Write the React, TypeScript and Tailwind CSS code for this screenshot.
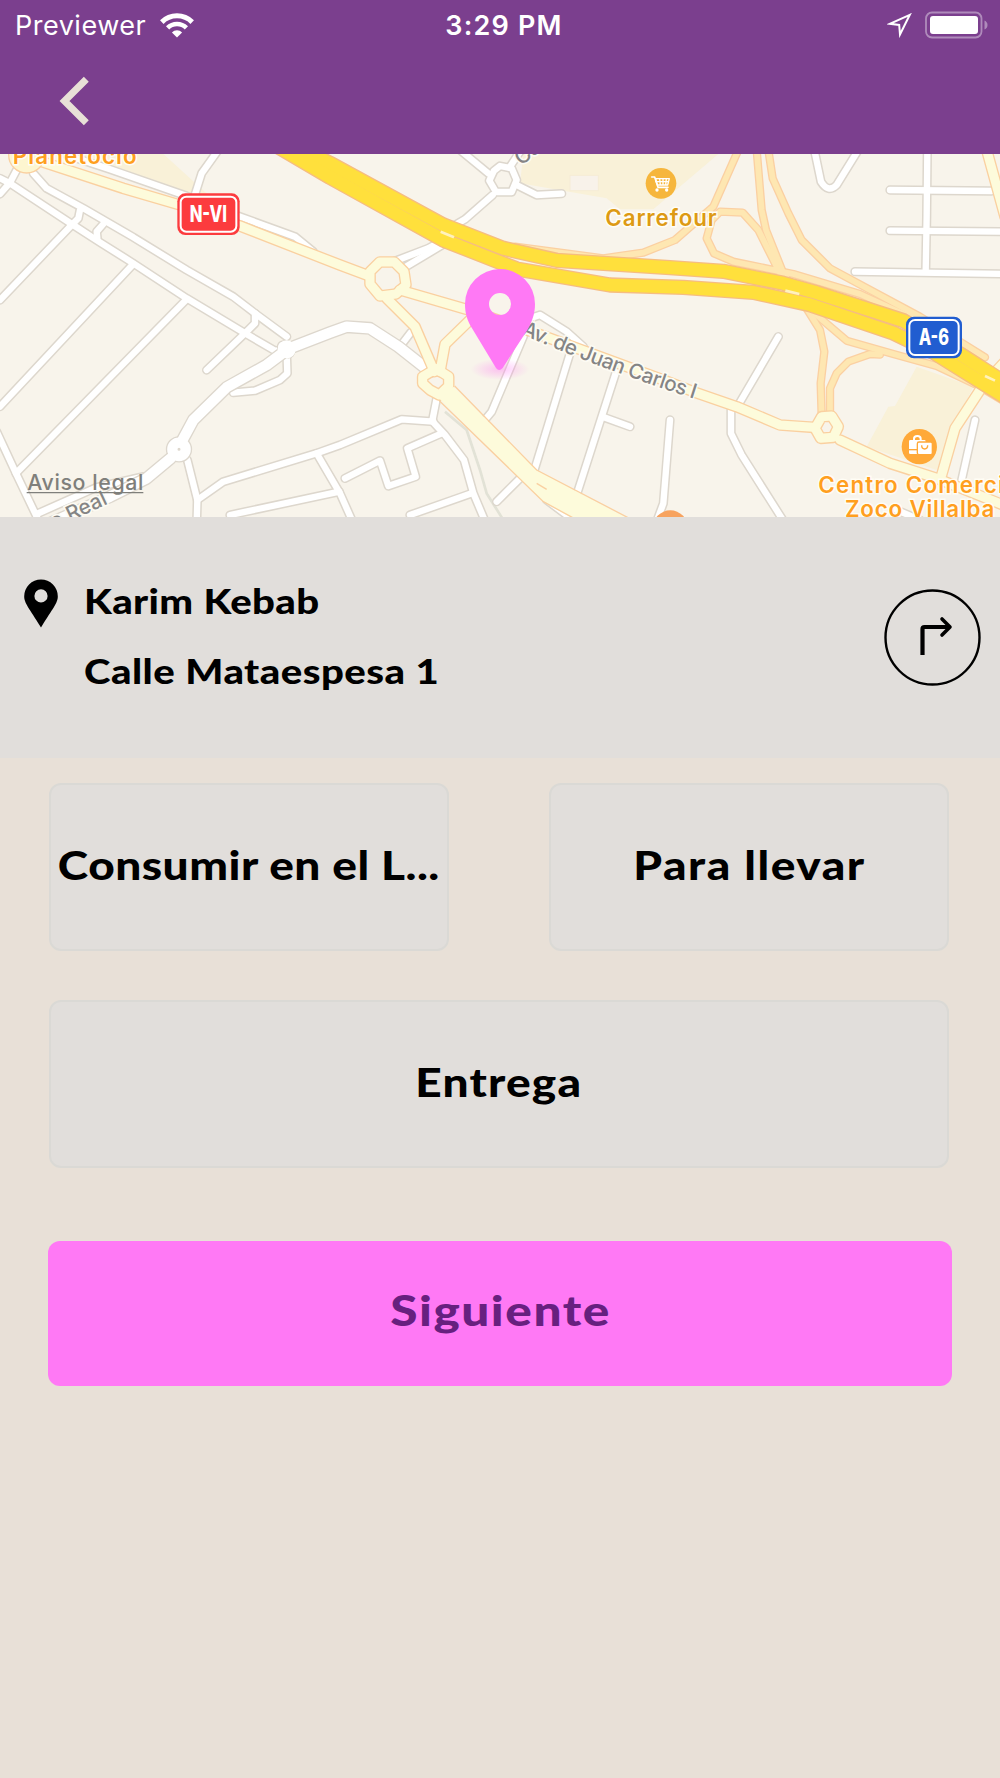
import type { ReactNode } from "react";

// Map geometry is drawn at three units per pixel
const streets = [
  "M0 85 L30 100 L215 222 L300 277 L400 340 L560 445 L735 550 L825 602 L860 600",
  "M100 70 L140 115 L250 175 L400 262 L560 360 L700 440 L765 490 L860 560",
  "M240 180 L235 205 L215 225 L0 450",
  "M310 222 L290 245 L292 265",
  "M765 490 L765 520 L735 550 L620 660",
  "M0 132 L30 98 L50 60",
  "M400 342 L0 770",
  "M560 448 L48 970",
  "M-10 845 L48 970 L115 1110",
  "M110 1092 L290 1012 L430 980",
  "M562 930 L592 1050 L590 1120",
  "M592 1050 L670 995 L950 910 L1020 885 L1205 808 L1300 815",
  "M950 910 L1020 1030 L1060 1120",
  "M690 1095 L1018 1025",
  "M860 610 L862 670 L840 690 L765 722 L700 728",
  "M655 0 L605 70 L583 140",
  "M200 15 L330 58 L560 138 L720 200 L885 260 L940 305",
  "M1380 0 L1465 70",
  "M1550 105 L1610 135 L1685 131",
  "M1478 135 L1395 208 L1340 240",
  "M1330 270 L1285 295 L1180 335",
  "M1335 280 L1210 355",
  "M1530 50 L1560 5",
  "M1590 505 L1620 495 L1700 545 L1750 590",
  "M1570 560 L1475 785 L1450 815",
  "M1710 610 L1600 970",
  "M1850 660 L1725 1050",
  "M1812 802 L1890 830",
  "M1565 980 L1490 1055",
  "M1310 745 L1297 812",
  "M1295 812 L1335 855 L1392 930 L1420 1030 L1458 1120",
  "M1325 850 L1222 895 L1247 980 L1165 1008 L1140 932 L1035 985",
  "M1415 1030 L1230 1095",
  "M1232 548 L1200 590",
  "M1640 1050 L1720 1110",
  "M2010 810 L1990 1060 L1968 1120",
  "M2335 560 L2215 765",
  "M2193 780 L2193 850 L2225 915 L2355 1120",
  "M2443 0 L2463 95 Q2485 130 2510 105 L2575 0",
  "M2782 0 L2780 200 L2777 365",
  "M2670 120 L2975 123",
  "M2670 242 L3010 245",
  "M2565 365 L3010 372",
  "M2925 810 L2885 990",
  "M2690 1080 L2760 1110",
];

const avenues = [
  "M860 598 L990 548 L1040 530 L1110 535 L1195 590 L1290 665",
  "M860 600 L800 645 L680 712 L580 810 L545 875",
  "M512 925 L440 985 L330 1040 L150 1120",
];

const creamRoads = [
  "M110 30 L370 115 L540 165 L720 228 L1020 345 L1100 375",
  "M1200 420 L1400 478 L1590 543 L1990 690 L2080 725 L2210 770 L2340 825 L2440 832",
  "M1160 445 L1245 530 L1303 665",
  "M1420 500 L1335 583 L1320 665",
  "M2520 870 L2670 940 L2810 985 L3010 1065",
  "M2825 975 L2865 835 L2950 705 L3010 640",
  "M2960 0 L3015 200",
];

const ramps = [
  "M2215 0 L2140 170 L2025 270 L1930 308 L1810 325 L1545 290",
  "M2270 0 L2285 180 L2298 240 L2350 370 L2410 460 L2460 540 L2473 605 L2462 700 L2465 800",
  "M2345 380 L2275 240 L2228 188 L2160 185 L2135 210 L2120 265 L2142 310 L2200 335 L2380 372 L2580 432 L2760 515",
  "M2305 0 L2318 85 L2365 190 L2405 270 L2490 355 L2620 425 L2760 500 L2880 575 L2955 622",
  "M2420 470 L2540 572 L2680 612 L2810 648 L2930 705 L3010 753",
  "M2640 614 L2610 612 L2545 635 L2510 670 L2490 715 L2490 800",
];

const highway = [
  "M870 -20 L990 40 L1330 225 L1510 295 L1670 331 L2010 353 L2170 364 L2350 400 L2450 428 L2710 512 L2880 612 L3015 698",
  "M830 -12 L990 82 L1330 270 L1550 357 L1830 405 L2050 412 L2260 427 L2430 464 L2680 549 L2800 607 L3015 741",
];

interface RoadsProps {
  paths: string[];
  width: number;
  edge: number;
  fill: string;
  casing: string;
  children?: ReactNode;
}

function Roads({ paths, width, edge, fill, casing, children }: RoadsProps) {
  return (
    <g fill="none" strokeLinecap="round" strokeLinejoin="round">
      <g stroke={casing} strokeWidth={width + edge * 2}>
        {paths.map((d) => (
          <path key={d} d={d} />
        ))}
        {children}
      </g>
      <g stroke={fill} strokeWidth={width}>
        {paths.map((d) => (
          <path key={d} d={d} />
        ))}
        {children}
      </g>
    </g>
  );
}

function MapView() {
  return (
    <svg
      viewBox="0 12 3000 1089"
      className="block w-full h-[363px] bg-[#f8f4eb] font-['Inter','Liberation_Sans',sans-serif]"
      preserveAspectRatio="none"
    >
      <defs>
        <radialGradient id="pinShadow">
          <stop offset="0" stopColor="#ff78f4" stopOpacity="0.4" />
          <stop offset="1" stopColor="#ff78f4" stopOpacity="0" />
        </radialGradient>
        <path id="juanCarlos" d="M1562 552 Q1830 668 2120 758" />
      </defs>

      {/* Commercial areas */}
      <g fill="#f9f1d8">
        <path d="M230 12 H490 L625 135 L560 125 Z" />
        <path d="M1570 12 H2155 L1960 178 H1860 L1820 145 L1560 100 Z" />
        <path d="M2750 650 L2920 710 L2860 830 L2810 960 L2600 890 L2665 770 L2685 768 Z" />
      </g>
      <rect x="1710" y="76" width="85" height="46" fill="#f8f2ea" stroke="#f6ecd6" strokeWidth="3" />
      <path d="M1335 785 L1400 840 L1440 960 L1460 1030 L1510 1110" fill="none" stroke="#e2e2d6" strokeWidth="8" />

      <Roads paths={streets} width={19} edge={4.5} fill="#ffffff" casing="#ddd7cd">
        <path d="M1482 62 L1500 48 L1535 55 L1550 90 L1535 126 L1488 126 L1468 92 Z" />
      </Roads>
      <Roads paths={avenues} width={31} edge={4} fill="#ffffff" casing="#ddd7cd">
        <path d="M850 590 L866 606" />
        <circle cx="537" cy="898" r="20" />
      </Roads>
      <circle cx="860" cy="598" r="27" fill="#fff" />

      <Roads paths={ramps} width={17} edge={4} fill="#fee7b2" casing="#fbd0a2" />
      <Roads paths={creamRoads} width={27} edge={4} fill="#fdfbdb" casing="#fad0a0">
        <path d="M1139 336 L1183 336 L1212 365 L1218 405 L1188 432 L1140 438 L1110 402 L1110 365 Z" />
        <path d="M1308 656 L1346 680 L1346 708 L1318 735 L1290 720 L1268 700 L1268 680 Z" />
        <path d="M2465 800 L2495 798 L2515 830 L2500 862 L2462 865 L2445 835 Z" />
      </Roads>
      <path
        d="M1320 748 L1630 1055 L1725 1110 H1890 L1610 960 L1360 710 Z"
        fill="#fdfbdb"
      />
      <path
        d="M1318 752 L1630 1055 L1735 1112 M1364 708 L1610 960 L1890 1106 M1610 1000 L1640 1018"
        fill="none"
        stroke="#fad0a0"
        strokeWidth="4"
      />
      <circle cx="80" cy="15" r="54" fill="#fdf6d0" stroke="#fad0a0" strokeWidth="4" />

      <Roads paths={highway} width={38} edge={4} fill="#ffe03c" casing="#f6bd80" />
      <path
        d="M1322 245 L1362 262 M2356 422 L2398 432 M2955 678 L2985 692"
        stroke="#fff2bd"
        strokeWidth="8"
      />

      {/* Road shields */}
      <rect x="532" y="130" width="187" height="125" rx="24" fill="#fc3b3e" />
      <rect x="542" y="140" width="167" height="105" rx="17" fill="none" stroke="#fff" strokeWidth="6" />
      <rect x="2718" y="500" width="168" height="125" rx="24" fill="#215dd0" />
      <rect x="2728" y="510" width="148" height="105" rx="17" fill="none" stroke="#fff" strokeWidth="6" />
      <g fill="#fff" fontSize="67" fontWeight="800">
        <text x="569" y="215" textLength="112" lengthAdjust="spacingAndGlyphs">
          N-VI
        </text>
        <text x="2756" y="586" textLength="91" lengthAdjust="spacingAndGlyphs">
          A-6
        </text>
      </g>

      {/* Street names */}
      <g fill="#858585" stroke="#fdfbf3" strokeWidth="10" paintOrder="stroke" fontSize="62" fontWeight="500">
        <text textLength="556">
          <textPath href="#juanCarlos">Av. de Juan Carlos I</textPath>
        </text>
        <text transform="translate(162 1137) rotate(-25)">e Real</text>
        <text transform="translate(1564 48) rotate(-38)">Ca</text>
      </g>

      {/* Places */}
      <g stroke="#fffdf5" strokeWidth="9" paintOrder="stroke" fontSize="67" fontWeight="600">
        <text x="38" y="43" fill="#ff9f1f" textLength="372">
          Planetocio
        </text>
        <text x="1816" y="227" fill="#dd9a14" textLength="334">
          Carrefour
        </text>
        <text x="2455" y="1028" fill="#ff9f1f" textLength="620">
          Centro Comercial
        </text>
        <text x="2535" y="1101" fill="#ff9f1f" textLength="448">
          Zoco Villalba
        </text>
      </g>

      <circle cx="1983" cy="100" r="46" fill="#f6b63c" />
      <g fill="none" stroke="#fff" strokeWidth="5" strokeLinejoin="round" strokeLinecap="round">
        <path d="M1955 81 H1964 L1974 112 H2004" />
        <path d="M1967 86 H2008 L2003 105 H1972 Z M1967 95 H2005 M1979 86 L1981 105 M1989 86 V105 M1999 86 L1997 105" strokeWidth="4" />
      </g>
      <circle cx="1971" cy="120" r="5" fill="#fff" />
      <circle cx="2000" cy="120" r="5" fill="#fff" />

      <circle cx="2758" cy="890" r="53" fill="#ffa938" />
      <path d="M2742 872 V866 Q2742 858 2752 858 Q2762 858 2762 866 V872" fill="none" stroke="#fff" strokeWidth="6" />
      <rect x="2727" y="870" width="50" height="42" rx="4" fill="#fff" />
      <path d="M2727 899 H2752" stroke="#ffa938" strokeWidth="4" />
      <rect x="2752" y="876" width="45" height="38" rx="5" fill="#fff" stroke="#ffa938" strokeWidth="4" />
      <path d="M2765 886 Q2765 897 2774 897 Q2783 897 2783 886" fill="none" stroke="#ffa938" strokeWidth="4" />
      <circle cx="2011" cy="1134" r="53" fill="#f7a35f" />

      {/* Selected restaurant */}
      <ellipse cx="1500" cy="658" rx="88" ry="32" fill="url(#pinShadow)" />
      <path
        fill="#ff79f5"
        fillRule="evenodd"
        d="M1500 357 A105 105 0 0 1 1605 462 C1605 492 1596 515 1582 540 L1508 654 Q1497 666 1488 654 L1416 535 C1402 512 1395 490 1395 462 A105 105 0 0 1 1500 357 Z M1500 429 A33 33 0 1 0 1500 495 A33 33 0 1 0 1500 429 Z"
      />

      <text x="82" y="1021" fill="#7f7f7b" fontSize="64" fontWeight="500" textLength="348">
        Aviso legal
      </text>
      <path d="M80 1028 H430" stroke="#7f7f7b" strokeWidth="4" />
    </svg>
  );
}

function StatusBar() {
  return (
    <div className="grid grid-cols-3 items-center h-[50px] pt-px pl-[15px] pr-[11px] text-white text-[27px] leading-none font-['Inter','Liberation_Sans',sans-serif]">
      <div className="flex items-center gap-[14px]">
        <span className="font-normal tracking-[0.5px]">Previewer</span>
        <svg width="34" height="25" viewBox="0 0 34 25" fill="none" stroke="#fff" className="-mt-px">
          <path d="M1.8 9.1 A21.6 21.6 0 0 1 32.2 9.1" strokeWidth="5" />
          <path d="M7.6 14.8 A13.4 13.4 0 0 1 26.4 14.8" strokeWidth="4.6" />
          <path d="M17 24.5 L11.9 19.4 A7.2 7.2 0 0 1 22.1 19.4 Z" fill="#fff" stroke="none" />
        </svg>
      </div>
      <span className="pl-1 text-center font-semibold tracking-[1.2px]">3:29 PM</span>
      <div className="flex items-center justify-end gap-[13px]">
        <svg width="25" height="25" viewBox="0 0 25 25" fill="none" stroke="#fff" strokeWidth="2" className="-mt-px">
          <path d="M22.8 1.8 L2.8 10.8 L12.2 12 L13 21.5 Z" />
        </svg>
        <svg width="64" height="28" viewBox="0 0 64 28" className="-mt-0.5">
          <rect x="1" y="1.5" width="55.5" height="25" rx="6" fill="none" stroke="#fff" strokeOpacity="0.4" strokeWidth="1.8" />
          <rect x="5" y="5" width="48" height="18" rx="3" fill="#fff" />
          <path d="M59.5 9.5 Q62.5 11 62.5 14 Q62.5 17 59.5 18.5 Z" fill="#fff" fillOpacity="0.4" />
        </svg>
      </div>
    </div>
  );
}

function OptionButton({ label, tracking }: { label: string; tracking: string }) {
  return (
    <button className="flex items-center justify-center h-[168px] rounded-xl border-2 border-[#dad9d5] bg-[#e1dedb] pb-1 text-[39px] font-black text-black whitespace-nowrap">
      <span className={`inline-block scale-x-[1.18] ${tracking}`}>{label}</span>
    </button>
  );
}

export default function App() {
  return (
    <div className="w-[1000px] h-[1778px] bg-[#e8e0d7] font-['Lato','Noto_Sans',sans-serif]">
      <header className="h-[154px] bg-[#7b3f8e]">
        <StatusBar />
        <button className="flex ml-[58px] mt-[26px]">
          <svg width="32" height="50" viewBox="0 0 32 50" fill="none" stroke="#e8e0d7" strokeWidth="7">
            <path d="M28.3 3.3 L6.5 25 L28.3 46.7" />
          </svg>
        </button>
      </header>

      <MapView />

      {/* Restaurant info */}
      <section className="flex h-[241px] bg-[#e1dedb] pl-6 pr-[19px]">
        <svg width="34" height="49" viewBox="0 0 34 49" className="mt-[62px]">
          <path
            fillRule="evenodd"
            d="M17 0.5 A16.8 16.8 0 0 1 33.8 17.5 C33.8 24 29 29 17 48.5 C5 29 0.2 24 0.2 17.5 A16.8 16.8 0 0 1 17 0.5 Z M17 10.3 A6.6 6.6 0 1 0 17 23.5 A6.6 6.6 0 1 0 17 10.3 Z"
          />
        </svg>
        <div className="flex-1 ml-[26px] mt-[49px] text-[34px] leading-[70px] font-black text-black whitespace-nowrap">
          <p className="origin-left scale-x-[1.18] tracking-[0.3px]">Karim Kebab</p>
          <p className="origin-left scale-x-[1.18] tracking-[0.4px]">Calle Mataespesa 1</p>
        </div>
        <button className="mt-[72px] h-[97px]">
          <svg width="97" height="97" viewBox="0 0 97 97" fill="none" stroke="#000">
            <circle cx="48.5" cy="48.5" r="47" strokeWidth="2.4" />
            <path d="M38.5 66 V40 Q38.5 38 40.5 38 H66" strokeWidth="4.2" />
            <path d="M58 30 L66 38 L58 46" strokeWidth="3.6" strokeLinecap="round" strokeLinejoin="round" />
          </svg>
        </button>
      </section>

      {/* Order type */}
      <div className="grid grid-cols-2 gap-x-[100px] gap-y-[49px] pl-[49px] pt-[25px] pr-[51px]">
        <OptionButton label="Consumir en el L..." tracking="tracking-[0.4px]" />
        <OptionButton label="Para llevar" tracking="tracking-[1.3px]" />
        <div className="col-span-2 grid">
          <OptionButton label="Entrega" tracking="tracking-[1px]" />
        </div>
      </div>

      <div className="px-12 pt-[73px]">
        <button className="flex items-center justify-center w-full h-[145px] rounded-xl bg-[#ff79f5] pb-1.5 text-[42px] font-black text-[#67207f]">
          <span className="inline-block scale-x-[1.18] tracking-[1.3px]">Siguiente</span>
        </button>
      </div>
    </div>
  );
}
